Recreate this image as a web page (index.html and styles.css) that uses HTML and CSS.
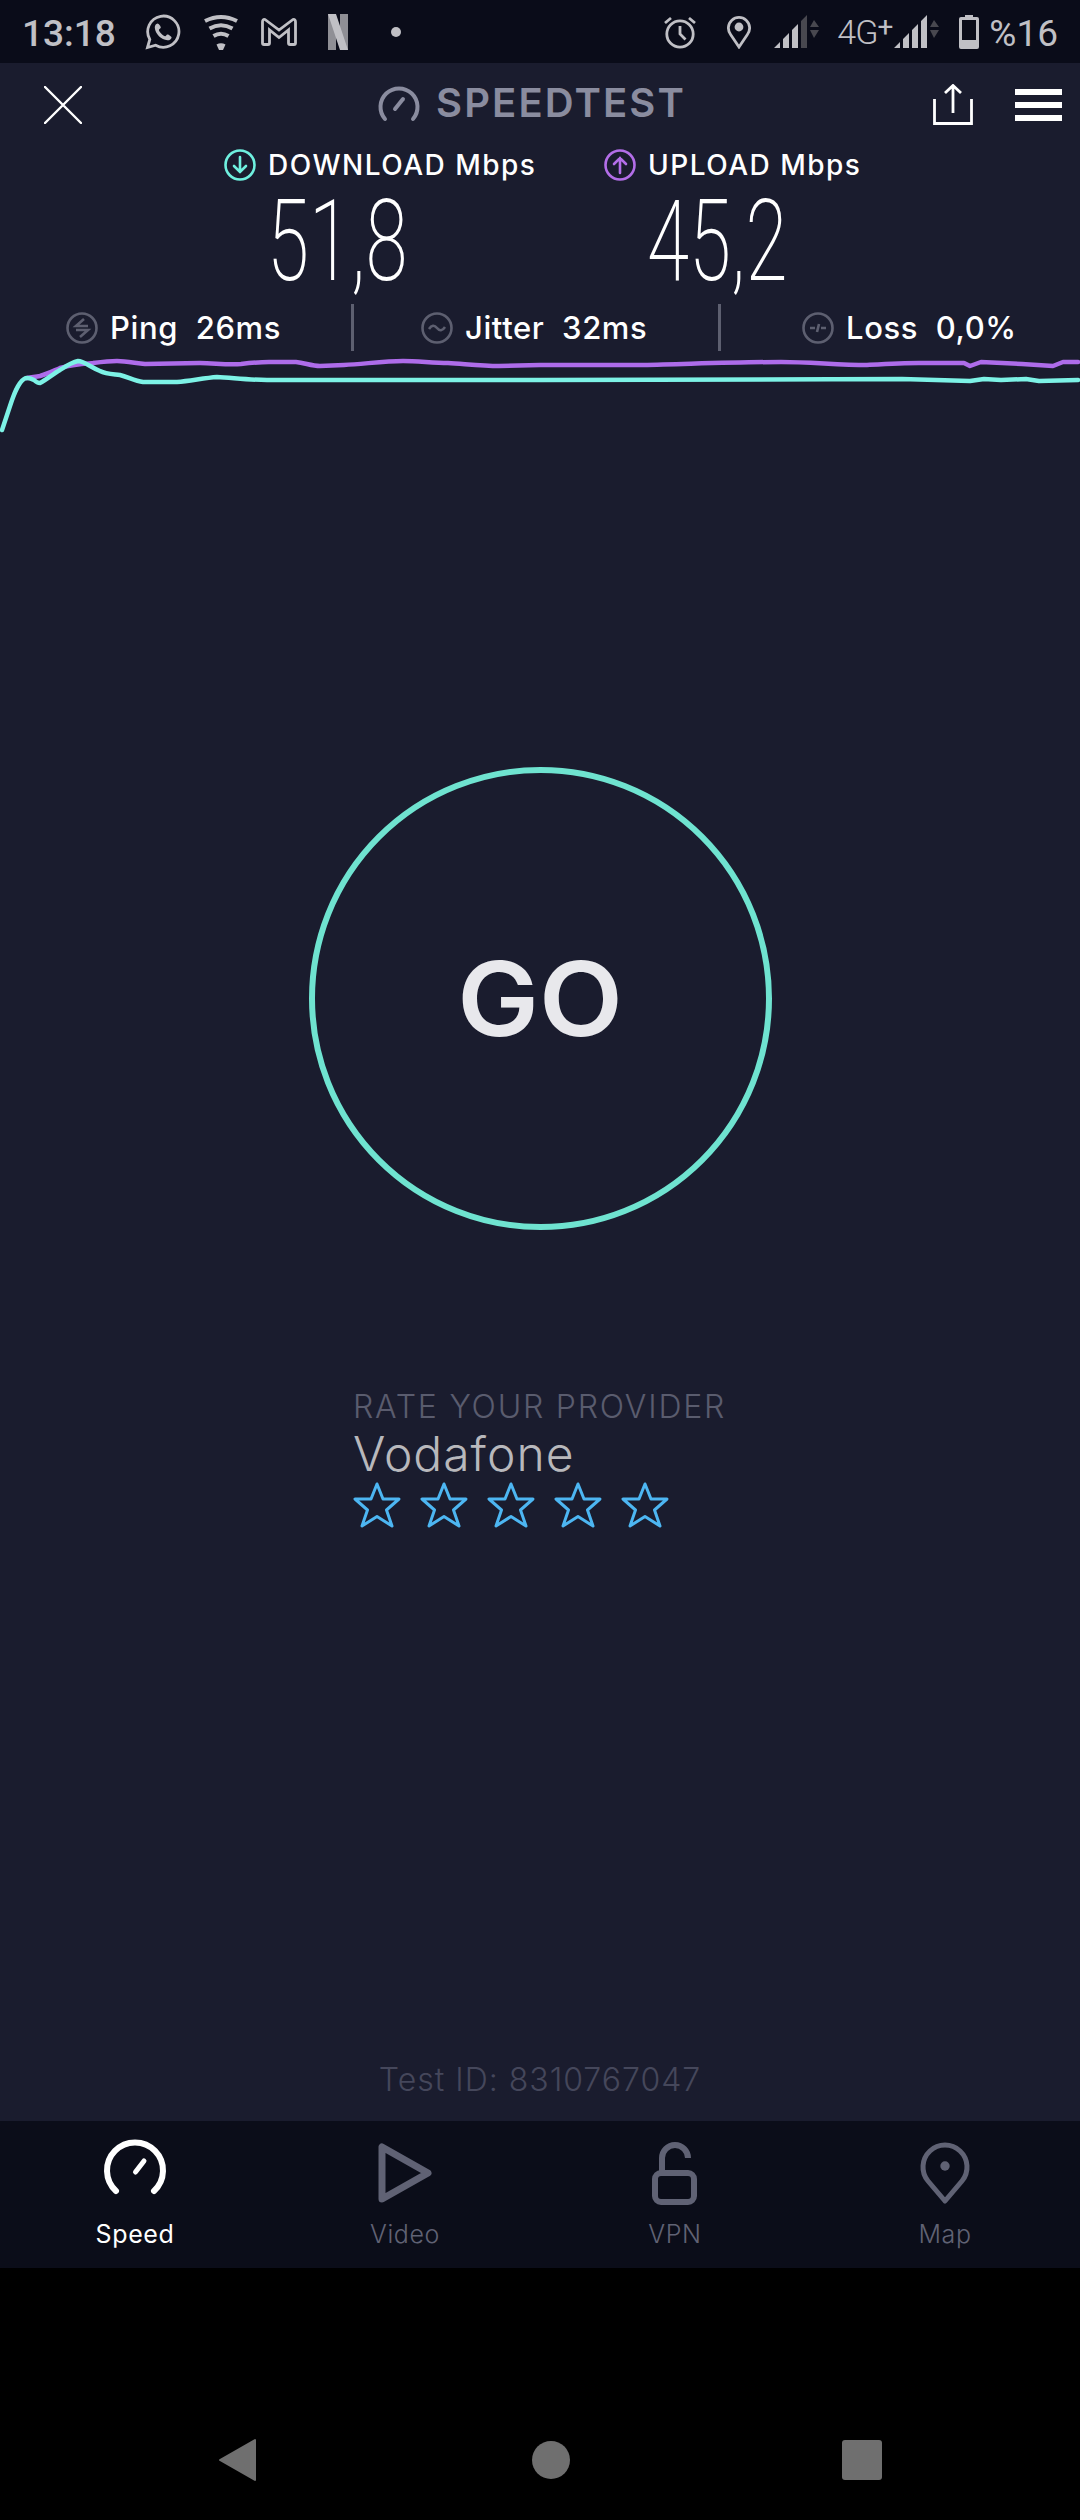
FILE: index.html
```html
<!DOCTYPE html>
<html lang="en">
<head>
<meta charset="utf-8">
<title>Speedtest</title>
<link rel="stylesheet" href="styles.css">
</head>
<body>
<div class="phone">
  <header class="status">
    <span class="clock">13:18</span>
    <svg class="i-wa" viewBox="0 0 36 36"><path class="sb-line" d="M2.5 33.5 L4.8 25.4 A15.6 15.6 0 1 1 10.6 31.2 Z"/><path class="sb-fill" d="M12.6 9.6 C11 9.8 9.6 11.6 9.8 13.8 C10.2 19.8 16.4 26 22.4 26.3 C24.6 26.4 26.5 25 26.6 23.4 C26.7 22.4 23.4 20.2 22.4 20.4 C21.4 20.6 21 22 20.2 22.2 C18.4 22 14 17.8 13.9 15.9 C14.1 15 15.6 14.6 15.8 13.7 C16 12.7 13.6 9.5 12.6 9.6 Z"/></svg>
    <svg class="i-wifi" viewBox="0 0 36 36"><path class="sb-arc" d="M2 7 Q18 -1 34 7"/><path class="sb-arc" d="M6.5 14.5 Q18 8 29.5 14.5"/><path class="sb-arc" d="M10.5 22 Q18 17.5 25.5 22"/><path class="sb-fill" d="M13.5 30.5 Q18 28 22.5 30.5 L20 36 L16 36 Z"/></svg>
    <svg class="i-m" viewBox="0 0 36 28"><path class="sb-line" d="M4 1.5 L18 12 L32 1.5 Q34.5 1 34.5 4 L34.5 25 Q34.5 26.5 33 26.5 L29 26.5 Q27.5 26.5 27.5 25 L27.5 12 L18 19.5 L8.5 12 L8.5 25 Q8.5 26.5 7 26.5 L3 26.5 Q1.5 26.5 1.5 25 L1.5 4 Q1.5 1 4 1.5 Z"/></svg>
    <svg class="i-n" viewBox="0 0 20 36"><path class="n-dark" d="M0 0 H8 V36 H0 Z M12 0 H20 V36 H12 Z"/><path class="sb-fill" d="M0 0 H8 L20 36 H12 Z"/></svg>
    <span class="dot"></span>
    <span class="status-space"></span>
    <svg class="i-alarm" viewBox="0 0 32 34"><circle class="sb-line" cx="16" cy="19" r="13.2"/><path class="sb-line" d="M16 11 V19 L21.5 24.5"/><path class="sb-line" d="M1 8 L7 3 M31 8 L25 3"/></svg>
    <svg class="i-pin" viewBox="0 0 24 34"><path class="sb-line" d="M12 32 L3.6 19.5 A10.6 10.6 0 1 1 20.4 19.5 Z"/><circle class="sb-fill" cx="12" cy="12" r="4.4"/></svg>
    <svg class="i-sig" viewBox="0 0 46 34"><path class="sb-fill" d="M0 33 L6 27 V33 Z M9 24 L15 18 V33 H9 Z"/><path class="sb-fill" d="M18 15 L24 9 V33 H18 Z"/><path class="sig-dim" d="M27 6 L33 0 V33 H27 Z M36 12 L40 5 L45 12 Z M36 15 H45 L40 23 Z"/></svg>
    <span class="net">4G<span class="net-plus">+</span></span>
    <svg class="i-sig2" viewBox="0 0 46 34"><path class="sb-fill" d="M0 33 L6 27 V33 Z M9 24 L15 18 V33 H9 Z M18 15 L24 9 V33 H18 Z M27 6 L33 0 V33 H27 Z"/><path class="sig-dim" d="M36 12 L40 5 L45 12 Z M36 15 H45 L40 23 Z"/></svg>
    <svg class="i-bat" viewBox="0 0 20 34"><path class="sb-fill" d="M6 0 H14 V2 H18 Q20 2 20 4 V32 Q20 34 18 34 H2 Q0 34 0 32 V4 Q0 2 2 2 H6 Z M3 5 V25 H17 V5 Z"/></svg>
    <span class="pct">%16</span>
  </header>

  <main class="app">
    <div class="topbar">
      <svg class="close" viewBox="0 0 38 38"><path d="M1 1 L37 37 M37 1 L1 37"/></svg>
      <div class="brand">
        <svg class="brand-ic" viewBox="0 0 42 37"><path d="M7 34 A18.5 18.5 0 1 1 35 34"/><path d="M17 24 L25 14"/></svg>
        <span class="brand-name">SPEEDTEST</span>
      </div>
      <div class="top-actions">
        <svg class="share" viewBox="0 0 40 41"><path d="M1.5 15 V39.5 H38.5 V15"/><path d="M20 29 V2 M12 9 L20 1.5 L28 9"/></svg>
        <div class="menu"><span></span><span></span><span></span></div>
      </div>
    </div>

    <div class="speeds">
      <section class="speed speed-down">
        <div class="speed-label">
          <svg class="sp-ic teal" viewBox="0 0 32 32"><circle cx="16" cy="16" r="14.5"/><path d="M16 8 V23 M10 17 L16 23 L22 17"/></svg>
          <span>DOWNLOAD Mbps</span>
        </div>
        <div class="speed-num">51,8</div>
      </section>
      <section class="speed speed-up">
        <div class="speed-label">
          <svg class="sp-ic purple" viewBox="0 0 32 32"><circle cx="16" cy="16" r="14.5"/><path d="M16 24 V9 M10 15 L16 9 L22 15"/></svg>
          <span>UPLOAD Mbps</span>
        </div>
        <div class="speed-num">45,2</div>
      </section>
    </div>

    <div class="stats">
      <div class="stat stat-ping">
        <svg class="st-ic" viewBox="0 0 32 32"><circle cx="16" cy="16" r="14.5"/><path d="M18 7 L10 14 H22 M14 25 L22 18 H10"/></svg>
        <span>Ping&nbsp; 26ms</span>
      </div>
      <i class="rule"></i>
      <div class="stat stat-jitter">
        <svg class="st-ic" viewBox="0 0 32 32"><circle cx="16" cy="16" r="14.5"/><path d="M8 17 Q12 11 16 16 T24 15"/></svg>
        <span>Jitter&nbsp; 32ms</span>
      </div>
      <i class="rule"></i>
      <div class="stat stat-loss">
        <svg class="st-ic" viewBox="0 0 32 32"><circle cx="16" cy="16" r="14.5"/><path d="M8 16 H13 M19 16 H24 M17 12 L15 20"/></svg>
        <span>Loss&nbsp; 0,0%</span>
      </div>
    </div>

    <svg class="graph" viewBox="0 0 1080 80" preserveAspectRatio="none">
      <path class="g-up" d="M27 20 C32 19 36 19 40 18 C47 16 53 13 60 10 C70 7 82 6 93 5 C101 4 109 3 117 3 C126 3 135 5 145 6 L200 5 C214 5 226 7 241 6 C250 5 260 4 269 4 L296 4 C305 5 312 8 320 8 L344 7 C364 6 384 3 403 3 C418 3 433 5 448 5 C465 6 482 8 499 8 L540 7 L643 7 C690 6 735 4 781 4 C810 4 838 7 867 7 C885 6 902 5 919 5 L964 5 L970 8 L981 4 L1022 6 L1053 8 L1063 4 L1078 4"/>
      <path class="g-down" d="M2 72 L10 48 C14 36 18 25 24 21 C27 19 30 20 34 22 C36 24 38 25 40 25 C46 22 53 16 60 12 C66 8 72 4 78 3 C84 3 90 9 100 13 C106 16 112 16 120 17 C128 19 135 23 143 24 L177 24 C190 23 204 20 217 19 C234 20 250 22 267 22 L540 22 L902 21 L970 23 L984 21 L1001 22 L1026 21 L1039 23 L1078 22"/>
    </svg>

    <div class="go-wrap">
      <div class="go"><span>GO</span></div>
    </div>

    <section class="rate">
      <div class="rate-title">RATE YOUR PROVIDER</div>
      <div class="rate-name">Vodafone</div>
      <div class="stars">
        <svg viewBox="0 0 48 46"><path d="M24 2 L30 17 H46 L33.5 28 L39 44 L24 34.5 L9 44 L14.5 28 L2 17 H18 Z"/></svg>
        <svg viewBox="0 0 48 46"><path d="M24 2 L30 17 H46 L33.5 28 L39 44 L24 34.5 L9 44 L14.5 28 L2 17 H18 Z"/></svg>
        <svg viewBox="0 0 48 46"><path d="M24 2 L30 17 H46 L33.5 28 L39 44 L24 34.5 L9 44 L14.5 28 L2 17 H18 Z"/></svg>
        <svg viewBox="0 0 48 46"><path d="M24 2 L30 17 H46 L33.5 28 L39 44 L24 34.5 L9 44 L14.5 28 L2 17 H18 Z"/></svg>
        <svg viewBox="0 0 48 46"><path d="M24 2 L30 17 H46 L33.5 28 L39 44 L24 34.5 L9 44 L14.5 28 L2 17 H18 Z"/></svg>
      </div>
    </section>

    <div class="test-id">Test ID: 8310767047</div>
  </main>

  <nav class="tabs">
    <div class="tab active">
      <svg viewBox="0 0 64 64" class="tab-ic"><path class="tk6" d="M13 51 A28 28 0 1 1 51 51"/><path class="tk5" d="M32.5 32 L41 21"/></svg>
      <span>Speed</span>
    </div>
    <div class="tab">
      <svg viewBox="0 0 64 64" class="tab-ic"><path class="tk7" d="M9 7 V59 L55 33 Z"/></svg>
      <span>Video</span>
    </div>
    <div class="tab">
      <svg viewBox="0 0 64 64" class="tab-ic"><path class="tk6 butt" d="M19 33 V18 A13 13 0 0 1 45 18"/><rect class="tk6" x="12" y="33" width="39" height="29" rx="6"/></svg>
      <span>VPN</span>
    </div>
    <div class="tab">
      <svg viewBox="0 0 64 64" class="tab-ic"><path class="tk5" d="M32 61 L15 41 A22 22 0 1 1 49 41 Z"/><circle class="tab-dot" cx="32" cy="26" r="4.7"/></svg>
      <span>Map</span>
    </div>
  </nav>

  <footer class="sysnav">
    <svg class="back" viewBox="0 0 38 44"><path d="M37 2 V42 L2 22 Z"/></svg>
    <span class="home"></span>
    <span class="recent"></span>
  </footer>
</div>
</body>
</html>
```
FILE: styles.css
```css
* { box-sizing: border-box; }
html, body { margin: 0; padding: 0; background: #000; }
.phone {
  width: 1080px; height: 2520px; display: flex; flex-direction: column;
  font-family: Inter, "Liberation Sans", sans-serif; overflow: hidden;
}

/* status bar */
.status {
  height: 63px; flex: none; background: #0a0c19; display: flex; align-items: center;
  padding-left: 22px; color: #c0c0c5; font-family: Roboto, sans-serif;
}
.clock { font-size: 37px; font-weight: 500; width: 123px; line-height: 1; margin-top: 3px; }
.status svg { display: block; flex: none; }
.sb-line { fill: none; stroke: #c0c0c5; stroke-width: 2.8; }
.sb-fill { fill: #c0c0c5; }
.sb-arc { fill: none; stroke: #c0c0c5; stroke-width: 4; }
.n-dark { fill: #8f8f95; }
.sig-dim { fill: #48484f; }
.i-wa { width: 36px; height: 36px; }
.i-wifi { width: 36px; height: 36px; margin-left: 22px; }
.i-m { width: 36px; height: 28px; margin-left: 22px; }
.i-n { width: 20px; height: 36px; margin-left: 31px; }
.dot { width: 10px; height: 10px; border-radius: 50%; background: #c0c0c5; margin-left: 43px; }
.status-space { flex: 1; }
.i-alarm { width: 32px; height: 34px; }
.i-pin { width: 24px; height: 34px; margin-left: 31px; }
.i-sig { width: 46px; height: 34px; margin-left: 23px; }
.net { font-size: 34px; font-weight: 300; margin-left: 17px; width: 50px; letter-spacing: -1px; white-space: nowrap; margin-top: 1px; }
.net-plus { position: relative; top: -8px; font-size: 28px; font-weight: 400; }
.i-sig2 { width: 46px; height: 34px; margin-left: 7px; }
.i-bat { width: 20px; height: 34px; margin-left: 19px; }
.pct { font-size: 37px; font-weight: 400; margin-left: 10px; margin-right: 22px; margin-top: 3px; line-height: 1; }

/* app */
.app { height: 2058px; flex: none; background: #1a1c2e; display: flex; flex-direction: column; color: #fff; }
.topbar { height: 65px; margin-top: 21px; flex: none; display: flex; align-items: flex-start; justify-content: space-between; padding: 0 18px 0 44px; }
.close { width: 38px; height: 38px; margin-top: 2px; }
.close path { fill: none; stroke: #fff; stroke-width: 2.4; stroke-linecap: round; }
.brand { display: flex; align-items: center; gap: 16px; height: 38px; margin-left: 49px; }
.brand-ic { width: 42px; height: 37px; }
.brand-ic path { fill: none; stroke: #8a8c9f; stroke-width: 4; stroke-linecap: round; }
.brand-name { font-size: 40px; font-weight: 600; color: #8a8c9f; letter-spacing: 2.1px; line-height: 1; }
.top-actions { display: flex; gap: 42px; align-items: flex-start; }
.share { width: 40px; height: 41px; }
.share path { fill: none; stroke: #fff; stroke-width: 2.8; }
.menu { width: 47px; display: flex; flex-direction: column; gap: 7px; padding-top: 5px; }
.menu span { display: block; height: 6px; background: #fff; }

.speeds { display: flex; height: 153px; flex: none; }
.speed-down { width: 380px; margin-left: 224px; }
.speed-label { display: flex; align-items: center; gap: 12px; height: 32px; font-size: 28px; font-weight: 500; letter-spacing: 1.5px; line-height: 1; white-space: nowrap; }
.sp-ic { width: 32px; height: 32px; flex: none; }
.sp-ic circle, .sp-ic path { fill: none; stroke-width: 2.6; stroke-linecap: round; }
.teal circle, .teal path { stroke: #6ff0df; }
.purple circle, .purple path { stroke: #b36ee8; }
.speed-num {
  font-family: Roboto, sans-serif; font-weight: 200; font-size: 114px; line-height: 1;
  margin-top: 3px; margin-left: 43px; width: max-content; transform: scaleX(0.67); transform-origin: left center;
}

.stats { display: flex; height: 47px; align-items: center; flex: none; margin-top: 2px; }
.stat { display: flex; align-items: center; gap: 12px; font-size: 31px; font-weight: 500; letter-spacing: 0.6px; white-space: nowrap; }
.stat-ping { margin-left: 66px; width: 285px; }
.stat-jitter { margin-left: 67px; width: 297px; }
.stat-loss { margin-left: 81px; }
.st-ic { width: 32px; height: 32px; flex: none; }
.st-ic circle, .st-ic path { fill: none; stroke: #5d5f70; stroke-width: 2.6; }
.rule { display: block; width: 3px; height: 47px; background: #5d5f70; flex: none; }

.graph { display: block; width: 1080px; height: 80px; flex: none; margin-top: 7px; }
.graph path { fill: none; stroke-width: 4.5; stroke-linecap: round; stroke-linejoin: round; }
.g-up { stroke: #ae6cea; }
.g-down { stroke: #7df2e6; }

.go-wrap { display: flex; justify-content: center; margin-top: 329px; }
.go { width: 463px; height: 463px; border-radius: 50%; border: 6px solid #6fe3d0; display: flex; align-items: center; justify-content: center; }
.go span { display: block; font-size: 103px; font-weight: 600; color: #e8e8ec; line-height: 1; transform: scaleX(1.06); }

.rate { margin: 158px 0 0 353px; }
.rate-title { font-size: 32px; font-weight: 300; letter-spacing: 1.8px; color: #5a5c6e; line-height: 38px; white-space: nowrap; }
.rate-name { font-size: 48px; font-weight: 300; letter-spacing: 1px; color: #b8b8bc; line-height: 56px; }
.stars { display: flex; gap: 19px; }
.stars svg { width: 48px; height: 46px; display: block; }
.stars path { fill: none; stroke: #4db6f2; stroke-width: 3; stroke-linejoin: round; }

.test-id { margin-top: auto; margin-bottom: 21px; text-align: center; font-size: 32px; font-weight: 300; letter-spacing: 1px; color: #45475b; line-height: 40px; }

/* tabs */
.tabs { height: 147px; flex: none; background: #0b0d19; display: grid; grid-template-columns: repeat(4, 1fr); }
.tab { display: flex; flex-direction: column; align-items: center; padding-top: 19px; color: #606274; font-size: 25px; font-weight: 300; letter-spacing: 0.6px; }
.tab span { line-height: 30px; margin-top: 15px; }
.tab.active { color: #fff; font-weight: 400; }
.tab-ic { width: 64px; height: 64px; display: block; overflow: visible; }
.tk5 { fill: none; stroke: currentColor; stroke-width: 5; stroke-linecap: round; stroke-linejoin: round; }
.tk6 { fill: none; stroke: currentColor; stroke-width: 6; stroke-linecap: round; stroke-linejoin: round; }
.tk7 { fill: none; stroke: currentColor; stroke-width: 7; stroke-linecap: round; stroke-linejoin: round; }
.butt { stroke-linecap: butt; }
.tab-dot { fill: currentColor; }

/* system nav */
.sysnav { flex: 1; background: #000; display: flex; align-items: center; padding-top: 132px; padding-left: 218px; }
.back { width: 38px; height: 44px; display: block; }
.back path { fill: #6f6f6f; stroke: #6f6f6f; stroke-width: 2; stroke-linejoin: round; }
.home { width: 38px; height: 38px; border-radius: 50%; background: #6f6f6f; margin-left: 276px; }
.recent { width: 40px; height: 40px; border-radius: 3px; background: #6f6f6f; margin-left: 272px; }
```
